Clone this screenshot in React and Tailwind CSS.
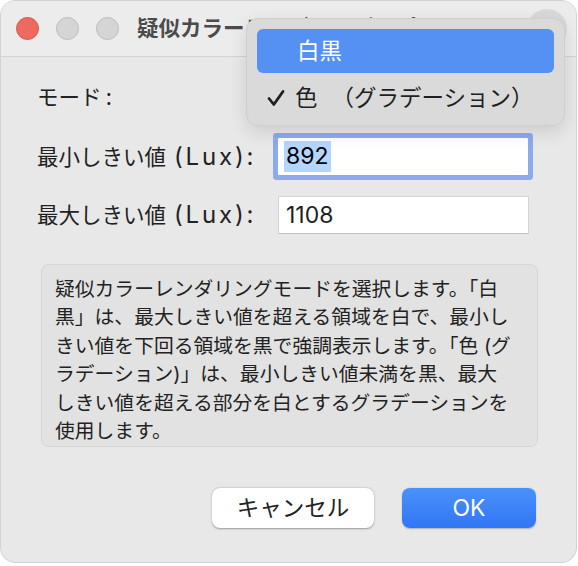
import { useState } from 'react'

const font = "font-[Inter,'Noto_Sans_CJK_JP',sans-serif]"

function TrafficLight({ color, border }) {
  return <span className={`h-[23px] w-[23px] rounded-full border ${color} ${border}`} />
}

function FieldRow({ label, children }) {
  return (
    <div className="flex items-center">
      <div className="w-[241px] whitespace-nowrap text-[21.5px] leading-[30px] text-[#222]">{label}</div>
      {children}
    </div>
  )
}

function Lux() {
  return <span className="ml-[2px] text-[24px] tracking-[2.8px]">(Lux):</span>
}

export default function App() {
  const [minLux] = useState('892')
  const [maxLux] = useState('1108')

  const descLines = [
    '疑似カラーレンダリングモードを選択します。「白',
    '黒」は、最大しきい値を超える領域を白で、最小し',
    'きい値を下回る領域を黒で強調表示します。「色 (グ',
    'ラデーション)」は、最小しきい値未満を黒、最大',
    'しきい値を超える部分を白とするグラデーションを',
    '使用します。',
  ]

  return (
    <div className={`h-[566px] w-[578px] bg-white ${font}`}>
      <div className="relative flex h-[563px] w-[577px] flex-col overflow-hidden rounded-[15px] border border-[#d2d2d2] bg-[#e8e8e8]">
        {/* title bar */}
        <div className="flex h-[56px] shrink-0 items-center border-b border-[#d3d3d3] bg-[#ececec] pl-[15px]">
          <div className="flex items-center gap-[17px]">
            <TrafficLight color="bg-[#ee6a5f]" border="border-[#d9574d]" />
            <TrafficLight color="bg-[#d5d5d5]" border="border-[#bcbcbc]" />
            <TrafficLight color="bg-[#d5d5d5]" border="border-[#bcbcbc]" />
          </div>
          <div className="ml-[18px] whitespace-nowrap text-[21.5px] font-bold text-[#4b4b4b]">
            疑似カラーレンダリングオプション
          </div>
          <div className="ml-auto mr-[9px] flex h-[40px] w-[40px] shrink-0 items-center justify-center rounded-full bg-[#d9d9d9] text-[20px] font-bold text-[#3a3a3a]">
            ?
          </div>
        </div>

        {/* body */}
        <div className="flex flex-1 flex-col pl-[36px]">
          <div className="mt-[20px] flex h-[40px] items-center">
            <div className="text-[21.5px] leading-[30px] text-[#222]">
              モード<span className="ml-[4px] text-[23px]">:</span>
            </div>
          </div>

          <div className="mt-[21px]">
            <FieldRow label={<>最小しきい値 <Lux /></>}>
              <div className="flex h-[37px] w-[250px] items-center rounded-[1px] bg-white pl-[6px] shadow-[0_0_0_5px_#8cabef]">
                <span className="bg-[#b4d5fe] px-[2px] text-[23px] leading-[31px] text-black">{minLux}</span>
              </div>
            </FieldRow>
          </div>

          <div className="mt-[21px]">
            <FieldRow label={<>最大しきい値 <Lux /></>}>
              <div className="flex h-[38px] w-[251px] items-center border border-[#d4d4d4] border-b-[#c2c2c2] bg-white pl-[7px] text-[23px] text-[#1e1e1e]">
                {maxLux}
              </div>
            </FieldRow>
          </div>

          <div className="ml-[4px] mt-[30px] h-[183px] w-[497px] rounded-[8px] border border-[#d6d6d6] bg-[#e2e2e2] pl-[13px] pt-[10px] text-[19.8px] leading-[28.4px] text-[#222]">
            {descLines.map((line) => (
              <div key={line} className="whitespace-nowrap">{line}</div>
            ))}
          </div>

          <div className="mr-[40px] mt-[41px] flex justify-end gap-[28px]">
            <button className="h-[40px] w-[162px] rounded-[8px] bg-white text-[22.5px] text-[#222] shadow-[0_0.5px_2px_rgba(0,0,0,0.35)]">
              キャンセル
            </button>
            <button className="h-[40px] w-[134px] rounded-[8px] bg-gradient-to-b from-[#4b91f9] to-[#3176f5] text-[23px] text-white shadow-[0_0.5px_1.5px_rgba(0,0,0,0.25)]">
              OK
            </button>
          </div>
        </div>

        {/* open popup menu */}
        <div className="absolute left-[245px] top-[17px] flex h-[108px] w-[319px] flex-col rounded-[12px] border border-[#cfcfcf] bg-[#dadada] px-[10px] pt-[10px] shadow-[0_6px_18px_rgba(0,0,0,0.12)]">
          <div className="flex h-[44px] items-center rounded-[6px] bg-[#5591f3] pl-[40px] text-[22.5px] text-white">
            白黒
          </div>
          <div className="mt-[3px] flex h-[44px] items-center text-[22.5px] text-[#1f1f1f]">
            <span className="flex w-[38px] justify-start pl-[10px]">
              <svg width="18" height="18" viewBox="0 0 18 18" fill="none">
                <path d="M2 9.5 L6.8 15.5 L16 2.5" stroke="#1f1f1f" strokeWidth="2.8" strokeLinecap="round" strokeLinejoin="round" />
              </svg>
            </span>
            <span className="whitespace-nowrap">色</span>
            <span className="ml-[14px] whitespace-nowrap">（グラデーション）</span>
          </div>
        </div>
      </div>
    </div>
  )
}
